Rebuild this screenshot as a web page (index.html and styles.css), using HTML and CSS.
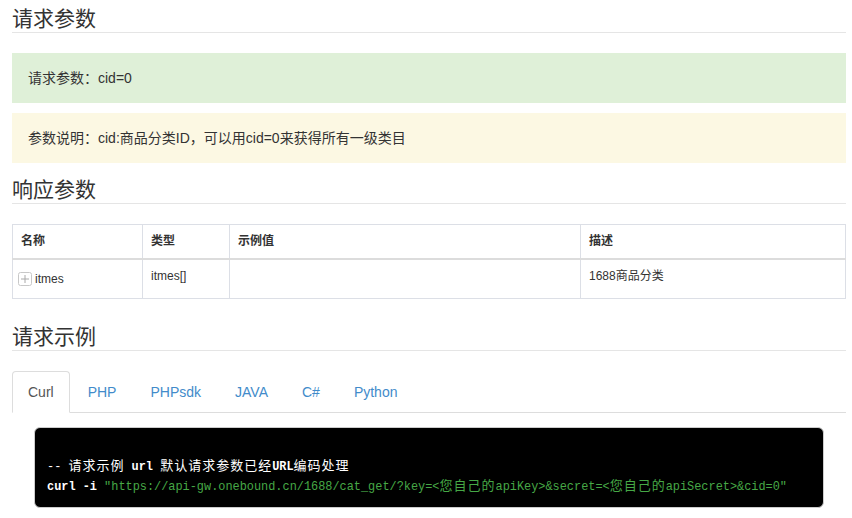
FILE: index.html
```html
<!DOCTYPE html>
<html lang="zh-CN">
<head>
<meta charset="utf-8">
<title>API</title>
<link rel="stylesheet" href="styles.css">
</head>
<body>
<div class="page">
  <h3 class="section-title first">请求参数</h3>
  <div class="alert alert-success">请求参数：cid=0</div>
  <div class="alert alert-warning">参数说明：cid:商品分类ID，可以用cid=0来获得所有一级类目</div>

  <h3 class="section-title">响应参数</h3>
  <table class="params">
    <colgroup>
      <col class="c1"><col class="c2"><col class="c3"><col class="c4">
    </colgroup>
    <thead>
      <tr><th>名称</th><th>类型</th><th>示例值</th><th>描述</th></tr>
    </thead>
    <tbody>
      <tr>
        <td class="name-cell"><span class="expand"><svg width="14" height="14" viewBox="0 0 14 14"><rect x="0.5" y="0.5" width="13" height="13" rx="2" fill="#fff" stroke="#c8c8c8"/><path d="M3 7h8M7 3v8" stroke="#aaa" stroke-width="1"/></svg></span>itmes</td>
        <td>itmes[]</td>
        <td></td>
        <td>1688商品分类</td>
      </tr>
    </tbody>
  </table>

  <h3 class="section-title after-table">请求示例</h3>
  <ul class="tabs">
    <li class="tab active"><a>Curl</a></li>
    <li class="tab"><a>PHP</a></li>
    <li class="tab"><a>PHPsdk</a></li>
    <li class="tab"><a>JAVA</a></li>
    <li class="tab"><a>C#</a></li>
    <li class="tab"><a>Python</a></li>
  </ul>
  <div class="tab-content">
<pre class="code">

<span class="plain">-- <span class="cjk">请求示例</span> <b>url</b> <span class="cjk">默认请求参数已经</span><b>URL</b><span class="cjk">编码处理</span></span>
<b>curl</b> <b>-i</b> <span class="str">"https://api-gw.onebound.cn/1688/cat_get/?key=&lt;<span class="cjk">您自己的</span>apiKey&gt;&amp;secret=&lt;<span class="cjk">您自己的</span>apiSecret&gt;&amp;cid=0"</span></pre>
  </div>
</div>
</body>
</html>
```

FILE: styles.css
```css
* { box-sizing: border-box; }
html, body { margin: 0; padding: 0; background: #fff; }
body {
  font-family: "Liberation Sans", Arial, "Noto Sans CJK SC", sans-serif;
  font-size: 13px;
  line-height: 20px;
  color: #333;
}
.page { padding: 0 6px 0 12px; }

.section-title {
  margin: 13px 0 0;
  padding: 0 0 3px;
  font-size: 21px;
  line-height: 24px;
  font-weight: 400;
  color: #333;
  border-bottom: 1px solid #e5e5e5;
  font-family: "Noto Sans CJK SC", sans-serif;
}
.section-title.first { margin-top: 5px; }
.section-title.after-table { margin-top: 24px; }

.alert {
  margin: 20px 0 10px;
  padding: 15px 16px;
  line-height: 20px;
  font-size: 14px;
  color: #333;
}
.alert + .alert { margin-top: 0; }
.alert-success { background: #dff0d8; }
.alert-warning { background: #fcf8e3; margin-bottom: 0; }

.params {
  width: 100%;
  margin-top: 20px;
  border-collapse: collapse;
  border: 1px solid #dcdfe6;
  font-size: 12px;
  line-height: 17px;
}
.params col.c1 { width: 130px; }
.params col.c2 { width: 87px; }
.params col.c3 { width: 351px; }
.params th, .params td {
  border: 1px solid #dcdfe6;
  padding: 8px;
  text-align: left;
  vertical-align: top;
}
.params th {
  font-weight: 700;
  color: #333;
  border-bottom: 2px solid #dcdcdc;
}
.params td { color: #333; height: 39px; }
.params td.name-cell { padding-left: 5px; padding-top: 11px; }
.expand { display: inline-block; width: 14px; height: 14px; vertical-align: -3px; margin-right: 3px; }
.expand svg { display: block; }

.tabs {
  list-style: none;
  margin: 20px 0 0;
  padding: 0;
  display: flex;
  border-bottom: 1px solid #ddd;
  font-size: 14px;
  line-height: 20px;
}
.tab { margin-right: 2px; margin-bottom: -1px; }
.tab a {
  display: block;
  padding: 10px 15px;
  border: 1px solid transparent;
  border-radius: 4px 4px 0 0;
  color: #428bca;
}
.tab.active a {
  color: #555;
  background: #fff;
  border-color: #ddd #ddd transparent;
}

.tab-content { padding: 14px 22px 0; }
.code {
  margin: 0;
  padding: 9px 12px 10px;
  background: #000;
  border: 1px solid #ccc;
  border-radius: 6px;
  font-family: "Liberation Mono", "Noto Sans CJK SC", monospace;
  font-size: 11.9px;
  line-height: 20px;
  color: #fff;
  white-space: pre;
}
.code b { font-weight: 700; color: #fff; }
.code .cjk { font-size: 13px; letter-spacing: 1px; }
.code .str { color: #46a846; }
```
